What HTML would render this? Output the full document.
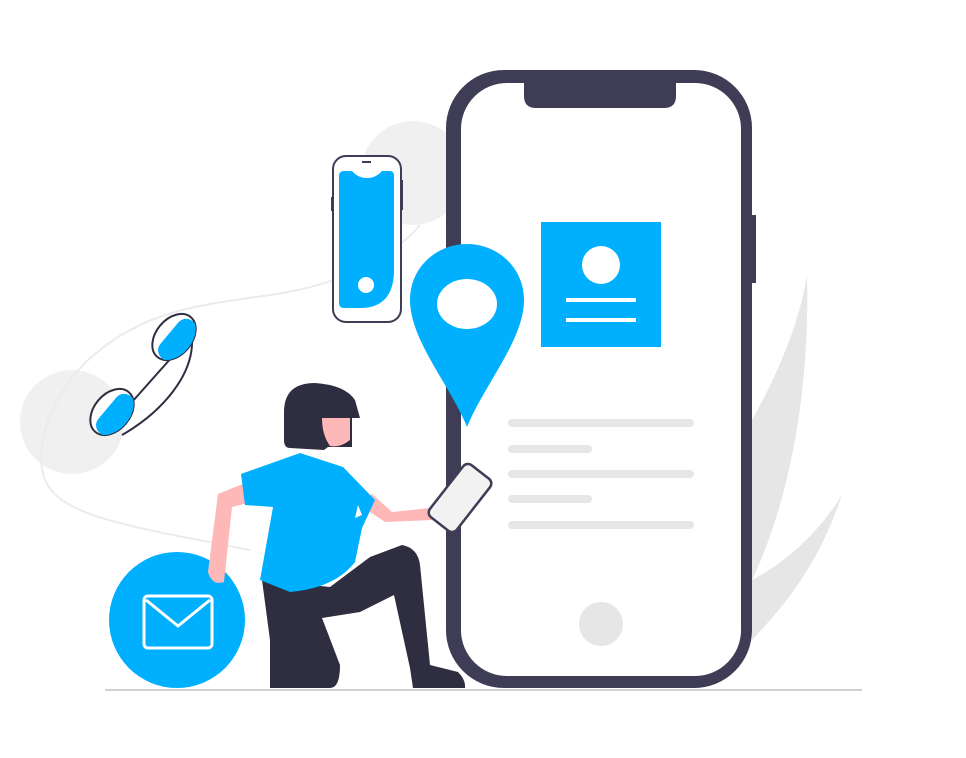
<!DOCTYPE html>
<html><head><meta charset="utf-8"><style>html,body{margin:0;padding:0;background:#fff;width:966px;height:758px;overflow:hidden}</style></head>
<body>
<svg width="966" height="758" viewBox="0 0 966 758" xmlns="http://www.w3.org/2000/svg">
<defs>
<clipPath id="c1"><ellipse cx="0" cy="0" rx="18" ry="26"/></clipPath>
</defs>
<circle cx="413" cy="173" r="52" fill="#f0f0f0"/>
<circle cx="72" cy="422" r="52" fill="#f0f0f0"/>
<path d="M420 225 C390 260 340 285 270 295 C200 305 150 310 100 350 C60 380 30 440 45 480 C60 515 120 525 250 550" fill="none" stroke="#ebebeb" stroke-width="2"/>
<path d="M807 275 C810 390 790 500 752 580 L752 420 C780 370 800 320 807 275Z" fill="#e6e6e6"/>
<path d="M842 495 C820 560 790 600 752 640 L752 580 C790 560 820 530 842 495Z" fill="#e6e6e6"/>
<line x1="105" y1="690" x2="862" y2="690" stroke="#d0d0d0" stroke-width="2"/>
<rect x="751" y="215" width="5" height="68" fill="#3f3d56"/>
<rect x="446" y="70" width="306" height="618" rx="58" fill="#3f3d56"/>
<rect x="461" y="83" width="280" height="593" rx="46" fill="#fff"/>
<path d="M524 83 H676 V96 Q676 108 664 108 H536 Q524 108 524 96Z" fill="#3f3d56"/>
<rect x="541" y="222" width="120" height="125" fill="#00b0ff"/>
<circle cx="601" cy="265" r="19" fill="#fff"/>
<line x1="566" y1="300" x2="636" y2="300" stroke="#fff" stroke-width="4"/>
<line x1="566" y1="320" x2="636" y2="320" stroke="#fff" stroke-width="4"/>
<g stroke="#e6e6e6" stroke-width="8" stroke-linecap="round">
<line x1="512" y1="423" x2="690" y2="423"/>
<line x1="512" y1="449" x2="588" y2="449"/>
<line x1="512" y1="474" x2="690" y2="474"/>
<line x1="512" y1="499" x2="588" y2="499"/>
<line x1="512" y1="525" x2="690" y2="525"/>
</g>
<circle cx="601" cy="624" r="22" fill="#e6e6e6"/>
<path d="M467 427 C450 385 410 340 410 300 C410 268 436 244 467 244 C498 244 524 268 524 300 C524 340 484 385 467 427Z" fill="#00b0ff"/>
<ellipse cx="467" cy="304" rx="30" ry="25" fill="#fff"/>
<rect x="333" y="156" width="68" height="166" rx="13" fill="#fff" stroke="#3f3d56" stroke-width="2"/>
<rect x="331" y="197" width="2" height="14" fill="#3f3d56"/><rect x="401" y="180" width="2" height="30" fill="#3f3d56"/>
<path d="M344 171 H352 Q358 178 367 178 Q376 178 382 171 H390 Q394 171 394 176 V270 Q394 308 360 308 H344 Q339 308 339 303 V176 Q339 171 344 171Z" fill="#00b0ff"/>
<circle cx="366" cy="285" r="8" fill="#fff"/>
<rect x="362" y="161" width="9" height="2" fill="#3f3d56"/>
<path d="M192 338 C194 375 162 412 122 435" fill="none" stroke="#2f2e41" stroke-width="2"/>
<path d="M172 357 L132 402" fill="none" stroke="#2f2e41" stroke-width="2"/>
<g transform="translate(174 337) rotate(40)">
<ellipse cx="0" cy="0" rx="18" ry="26" fill="#fff" stroke="#2f2e41" stroke-width="2"/>
<g clip-path="url(#c1)"><rect x="-6" y="-24" width="24" height="48" rx="10" fill="#00b0ff"/></g>
</g>
<g transform="translate(112 412) rotate(40)">
<ellipse cx="0" cy="0" rx="18" ry="26" fill="#fff" stroke="#2f2e41" stroke-width="2"/>
<g clip-path="url(#c1)"><rect x="-6" y="-24" width="24" height="48" rx="10" fill="#00b0ff"/></g>
</g>
<circle cx="177" cy="620" r="68" fill="#00b0ff"/>
<rect x="144" y="596" width="68" height="52" rx="4" fill="none" stroke="#fff" stroke-width="3"/>
<path d="M146 600 L178 626 L210 600" fill="none" stroke="#fff" stroke-width="3"/>
<path d="M245 483 L218 494 L208 572 Q212 586 224 582 L232 507 L252 502Z" fill="#ffb8b8"/>
<path d="M360 505 L385 522 L432 520 L430 508 L392 512 L372 494Z" fill="#ffb8b8"/>
<path d="M262 580 L330 587 L370 557 L402 545 Q418 548 420 565 L430 665 L458 672 Q466 680 465 688 L413 688 L410 668 L394 595 L360 612 L322 618 L340 665 Q340 688 330 688 L290 688 L272 655 L270 640Z" fill="#2f2e41"/>
<path d="M270 636 L290 636 L292 688 L270 688Z" fill="#2f2e41"/>
<path d="M241 474 L300 453 L343 467 L375 500 L362 528 L355 562 Q335 588 290 592 L260 580 L273 507 L245 505Z" fill="#00b0ff"/>
<path d="M358 505 L362 515 L355 518Z" fill="#fff"/>
<path d="M284 412 Q284 383 315 383 Q345 385 355 400 L360 418 L352 418 L352 447 L328 447 L324 450 L290 448 Q284 448 284 440Z" fill="#2f2e41"/>
<path d="M322 418 L350 418 L350 440 Q340 448 330 446 Q322 435 322 418Z" fill="#ffb8b8"/>
<g transform="translate(460 498) rotate(38)">
<rect x="-17" y="-33" width="34" height="66" rx="6" fill="#f2f2f2" stroke="#3f3d56" stroke-width="2.5"/>
</g>
</svg>
</body></html>
